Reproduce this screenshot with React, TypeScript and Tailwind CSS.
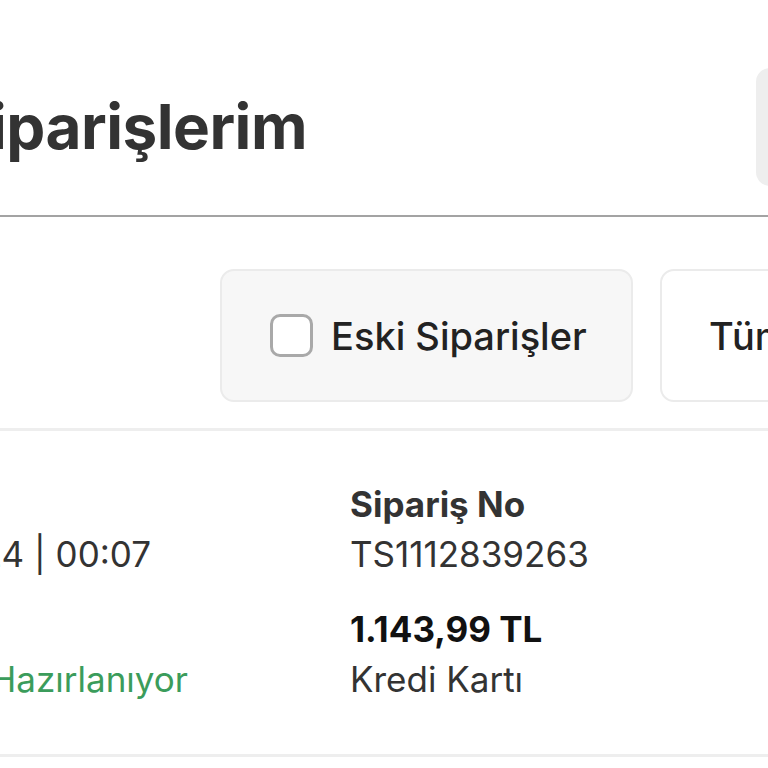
export default function App() {
  return (
    <div className="relative h-[768px] w-[768px] overflow-hidden bg-white font-['Inter','Liberation_Sans',sans-serif]">
      <div className="flex h-[215px] items-start">
        <div className="mt-[96px] flex w-[307px] shrink-0 justify-end">
          <h1 className="whitespace-nowrap text-[62px] font-bold leading-none tracking-[-0.5px] text-[#333333]">
            Siparişlerim
          </h1>
        </div>
        <div className="-mr-[88px] ml-auto mt-[68px] h-[118px] w-[100px] shrink-0 rounded-[14px] bg-[#eeeeee]" />
      </div>
      <div className="h-[2px] bg-[#a3a3a3]" />
      <div className="flex gap-[27px] pb-[26px] pl-[220px] pt-[52px]">
        <div className="flex h-[133px] w-[413px] shrink-0 items-center gap-[18px] rounded-[14px] border-2 border-[#ebebeb] bg-[#f7f7f7] pl-[48px]">
          <div className="h-[43px] w-[43px] shrink-0 rounded-[10px] border-[3px] border-[#a9a9a9] bg-white" />
          <span className="whitespace-nowrap text-[38px] font-medium leading-none text-[#222222]">Eski Siparişler</span>
        </div>
        <div className="flex h-[133px] w-[300px] shrink-0 items-center rounded-[14px] border-2 border-[#ebebeb] bg-white pl-[47px]">
          <span className="whitespace-nowrap text-[38px] font-medium leading-none text-[#222222]">Tüm Siparişler</span>
        </div>
      </div>
      <div className="h-[3px] bg-[#eeeeee]" />
      <div className="flex h-[323px] pt-[48px] text-[35px] leading-[50px]">
        <div className="w-[350px] shrink-0 pt-[50px]">
          <div className="flex w-[151px] justify-end">
            <span className="whitespace-nowrap text-[#333333]">24.11.2024 | 00:07</span>
          </div>
          <div className="mt-[75px] flex w-[188px] justify-end">
            <span className="whitespace-nowrap text-[#3b9c5b]">Hazırlanıyor</span>
          </div>
        </div>
        <div className="flex flex-col">
          <span className="whitespace-nowrap font-bold text-[#333333]">Sipariş No</span>
          <span className="whitespace-nowrap text-[#333333]">TS1112839263</span>
          <span className="mt-[25px] whitespace-nowrap font-bold text-[#111111]">1.143,99 TL</span>
          <span className="whitespace-nowrap text-[#333333]">Kredi Kartı</span>
        </div>
      </div>
      <div className="h-[3px] bg-[#eeeeee]" />
    </div>
  );
}
